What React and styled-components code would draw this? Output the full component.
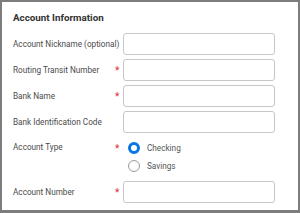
import React from 'react'
import styled, { createGlobalStyle } from 'styled-components'

const Global = createGlobalStyle`
  html, body { margin: 0; padding: 0; background: #fff; }
  * { box-sizing: border-box; }
  body { font-family: Roboto, "Liberation Sans", Arial, sans-serif; }
`

const fields = [
  { label: 'Account Nickname (optional)' },
  { label: 'Routing Transit Number', required: true },
  { label: 'Bank Name', required: true },
  { label: 'Bank Identification Code' },
]

const App = () => {
  return (
    <>
      <Global />
      <Frame>
        <Title>Account Information</Title>
        <Form>
          {fields.map((f) => (
            <Row key={f.label}>
              <Label>{f.label}</Label>
              <Star>{f.required ? '*' : ''}</Star>
              <Input />
            </Row>
          ))}
          <RadioRow>
            <Label>Account Type</Label>
            <Star>*</Star>
            <Options>
              <Option>
                <Radio checked />
                <span>Checking</span>
              </Option>
              <Option>
                <Radio />
                <span>Savings</span>
              </Option>
            </Options>
          </RadioRow>
          <Row>
            <Label>Account Number</Label>
            <Star>*</Star>
            <Input />
          </Row>
        </Form>
      </Frame>
    </>
  )
}

const Frame = styled.div`
  width: 300px;
  height: 213px;
  border: 2px solid #7d7d7d;
  border-bottom-width: 3px;
  background: #fff;
  padding: 9px 0 0 10px;
  overflow: hidden;
`

const Title = styled.div`
  font-size: 9.8px;
  font-weight: 700;
  color: #333;
  line-height: 14px;
  height: 20px;
  padding-left: 1px;
`

const Form = styled.div`
  display: flex;
  flex-direction: column;
  padding-top: 2px;
`

const Row = styled.div`
  display: flex;
  align-items: center;
  height: 21px;
  margin-bottom: 5px;
`

const Label = styled.div`
  width: 103px;
  padding-left: 1px;
  font-size: 8.2px;
  color: #4a4a4a;
  white-space: nowrap;
`

const Star = styled.div`
  width: 8px;
  color: #de2e2e;
  font-size: 10px;
  line-height: 10px;
  padding-top: 2px;
`

const Input = styled.div`
  width: 152px;
  height: 22px;
  border: 1px solid #c7c7c7;
  border-radius: 3px;
  background: #fff;
`

const RadioRow = styled.div`
  display: flex;
  align-items: flex-start;
  padding-top: 5px;
  margin-bottom: 9px;
`

const Options = styled.div`
  display: flex;
  flex-direction: column;
  gap: 6px;
  padding-left: 5px;
`

const Option = styled.div`
  display: flex;
  align-items: center;
  gap: 7px;
  font-size: 8.2px;
  color: #555;
  height: 12px;
`

const Radio = styled.span`
  width: 12px;
  height: 12px;
  border-radius: 50%;
  border: ${(p) => (p.checked ? '3px solid #0875e1' : '1px solid #9a9a9a')};
  background: #fff;
  display: inline-block;
`

export default App
